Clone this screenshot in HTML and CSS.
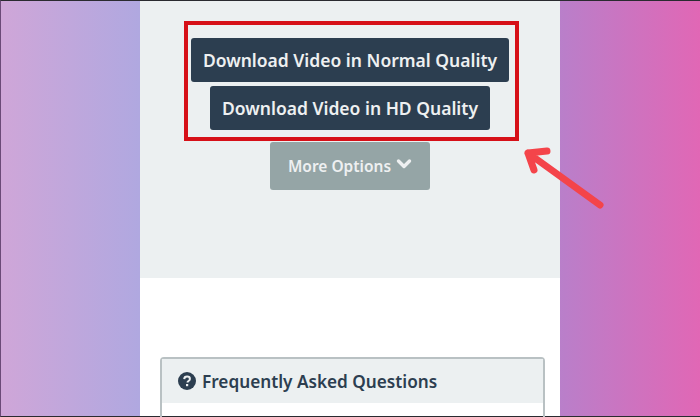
FILE: index.html
```html
<!DOCTYPE html>
<html lang="en">
<head>
    <meta charset="UTF-8">
    <meta name="viewport" content="width=device-width, initial-scale=1.0">
    <title>Download Video</title>
    <link rel="stylesheet" href="styles.css">
</head>
<body>
    <div class="page">
        <div class="side side-left"></div>
        <main class="center">
            <section class="download">
                <a class="btn btn-dark">Download Video in Normal Quality</a>
                <a class="btn btn-dark">Download Video in HD Quality</a>
                <a class="btn btn-grey">More Options
                    <svg class="chevron" viewBox="0 0 16 12" width="16" height="12"><path d="M2.5 3 8 8.5 13.5 3" fill="none" stroke="#eef0f1" stroke-width="3.4" stroke-linecap="round" stroke-linejoin="round"/></svg>
                </a>
            </section>
            <section class="faq">
                <div class="faq-card">
                    <h2 class="faq-head">
                        <svg class="help" viewBox="0 0 18 18" width="18" height="18">
                            <circle cx="9" cy="9" r="9" fill="#2c3e50"/>
                            <path d="M6.2 7.1C6.3 5.5 7.5 4.6 9.1 4.6c1.6 0 2.8.9 2.8 2.3 0 1.2-.8 1.7-1.5 2.2-.6.4-.9.7-.9 1.4" fill="none" stroke="#eceff0" stroke-width="2"/>
                            <rect x="8" y="12" width="2.2" height="2.2" fill="#eceff0"/>
                        </svg>
                        Frequently Asked Questions
                    </h2>
                </div>
            </section>
        </main>
        <div class="side side-right"></div>
    </div>
    <div class="highlight"></div>
    <svg class="arrow" viewBox="0 0 100 80" width="100" height="80">
        <path d="M90 65 18 13M18 13 37 11M18 13 24 30" fill="none" stroke="#f4444a" stroke-width="7" stroke-linecap="round" stroke-linejoin="round"/>
    </svg>
</body>
</html>
```
FILE: styles.css
```css
*{
    box-sizing: border-box;
}
body{
    margin: 0;
    background-color: #fff;
    font-family: "Noto Sans", "Open Sans", sans-serif;
    overflow: hidden;
}
.page{
    position: relative;
    display: flex;
    width: 700px;
    height: 417px;
    border-top: 1px solid #2a2a30;
    border-bottom: 1px solid #2a2a30;
    border-left: 1px solid #6b4a78;
}
.side{
    flex: none;
}
.side-left{
    width: 139px;
    background: linear-gradient(to right, #cfa6d8, #b0a8e0);
}
.side-right{
    width: 140px;
    background: linear-gradient(to right, #b97fca, #e167b5);
}
.center{
    width: 420px;
    background-color: #fff;
}
.download{
    height: 277px;
    padding-top: 37px;
    background-color: #ecf0f1;
    display: flex;
    flex-direction: column;
    align-items: center;
}
.btn{
    display: flex;
    align-items: center;
    justify-content: center;
    height: 44px;
    border-radius: 3px;
    color: #eef0f1;
    font-size: 17.5px;
    font-weight: 600;
}
.btn-dark{
    background-color: #2c3e50;
    margin-bottom: 4px;
}
.btn-dark:nth-child(1){
    width: 318px;
}
.btn-dark:nth-child(2){
    width: 280px;
    margin-bottom: 12px;
}
.btn-grey{
    width: 160px;
    height: 48px;
    gap: 5px;
    font-size: 15.5px;
    background-color: #95a5a6;
}
.chevron{
    margin-top: -4px;
}
.faq{
    padding: 79px 15px 0 20px;
}
.faq-card{
    height: 70px;
    border: 2px solid #b9c1c3;
    border-radius: 4px;
}
.faq-head{
    margin: 0;
    height: 44px;
    padding-left: 16px;
    display: flex;
    align-items: center;
    gap: 6px;
    background-color: #ecf0f1;
    color: #2c3e50;
    font-size: 17.2px;
    font-weight: 600;
}
.highlight{
    position: absolute;
    left: 184px;
    top: 21px;
    width: 335px;
    height: 120px;
    border: 4px solid #d61018;
}
.arrow{
    position: absolute;
    left: 510px;
    top: 140px;
}
```
